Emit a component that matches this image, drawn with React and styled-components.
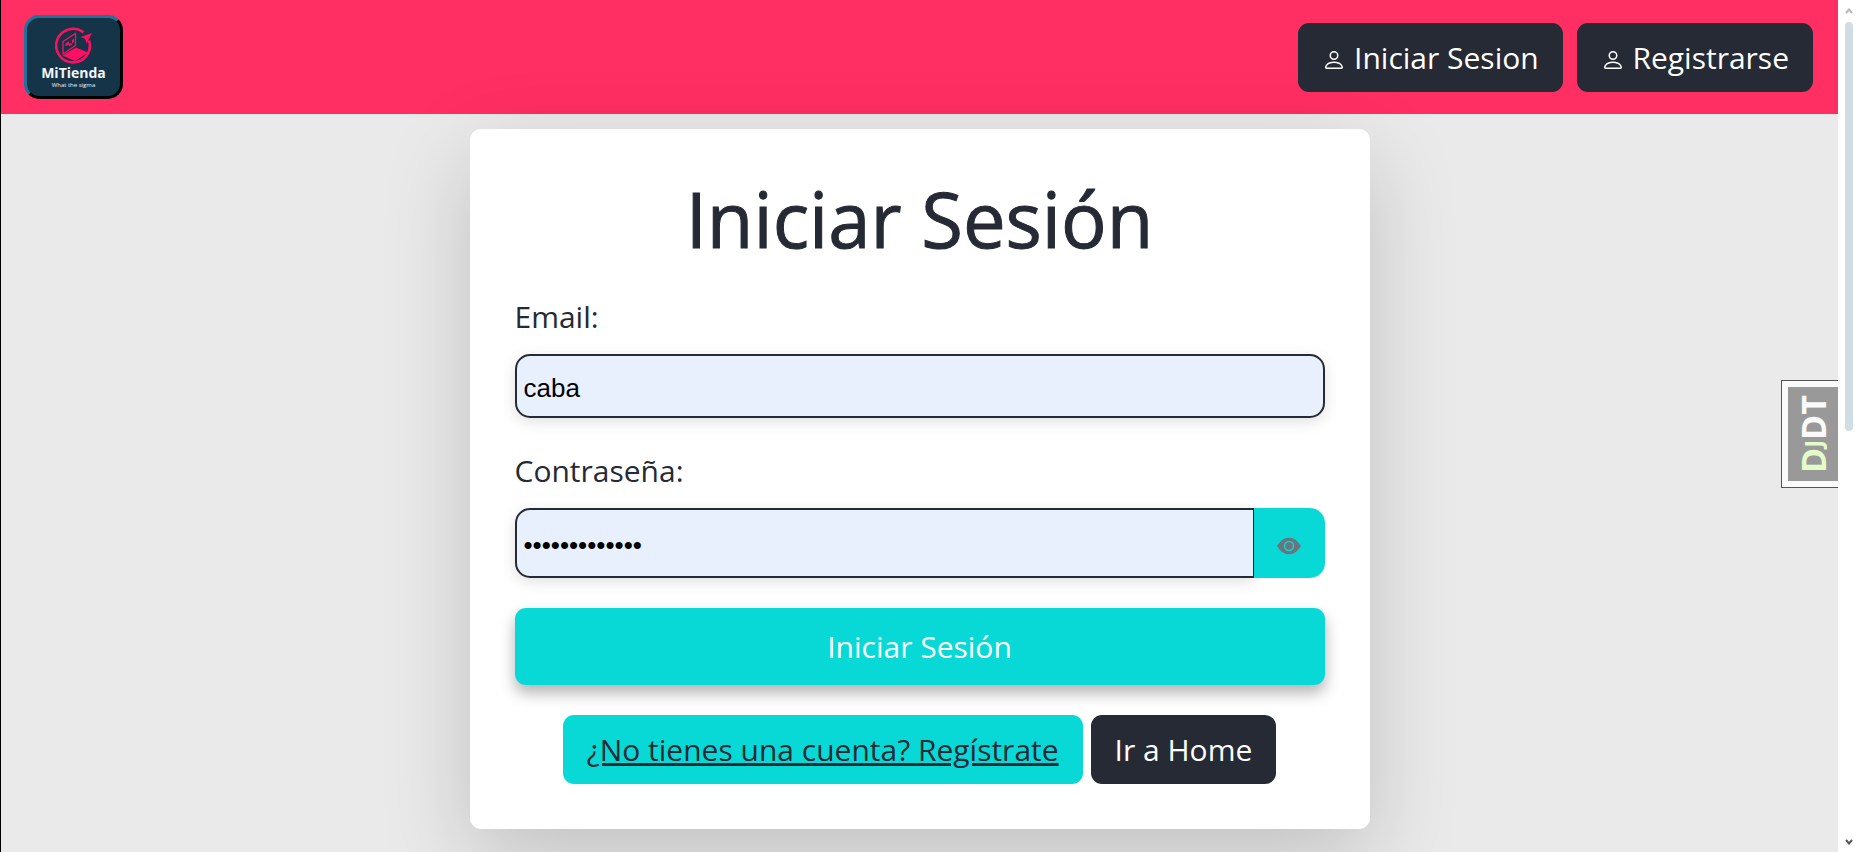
import React, { useState } from "react";
import styled, { createGlobalStyle } from "styled-components";
import { BsPerson, BsEyeFill } from "react-icons/bs";

const GlobalStyle = createGlobalStyle`
  *, *::before, *::after { box-sizing: border-box; }
  body {
    margin: 0;
    background: #eaeaea;
    color: #252a34;
    font-family: "Open Sans", "Noto Sans", sans-serif;
    font-size: 30px;
    line-height: 45px;
  }
`;

const Shell = styled.div`
  display: flex;
  min-height: 100vh;
  border-left: 1px solid #000;
`;

const Page = styled.div`
  position: relative;
  flex: 1;
  min-width: 0;
  overflow: hidden;
`;

const Header = styled.header`
  display: flex;
  align-items: center;
  justify-content: space-between;
  padding: 15px 25px 15px 23px;
  background: #ff2e63;
`;

const Logo = styled.a`
  display: flex;
  flex-direction: column;
  align-items: center;
  width: 99px;
  height: 84px;
  padding-top: 9px;
  border: 3px solid;
  border-color: #24719b #000 #000 #24719b;
  border-radius: 15px;
  background: #153447;
  color: #f2f5f7;
  text-decoration: none;
`;

const LogoName = styled.span`
  font-size: 14px;
  font-weight: 700;
  line-height: 16px;
`;

const LogoTagline = styled.span`
  font-size: 6px;
  line-height: 8px;
`;

const Nav = styled.nav`
  display: flex;
  gap: 14px;
`;

const ButtonLink = styled.a`
  display: inline-block;
  padding: 12px 24px;
  border-radius: 11px;
  background: ${(p) => (p.$accent ? "#08d9d6" : "#252a34")};
  color: ${(p) => (p.$accent ? "#252a34" : "#fff")};
  text-decoration: ${(p) => (p.$accent ? "underline" : "none")};
  text-decoration-thickness: 3px;
  text-underline-offset: 2px;
  white-space: nowrap;

  svg { font-size: 24px; vertical-align: -3px; }
`;

const Card = styled.main`
  width: 100%;
  max-width: 900px;
  margin: 15px auto 23px;
  padding: 45px;
  border-radius: 11px;
  background: #fff;
  box-shadow: 0 30px 90px rgba(0, 0, 0, 0.175);
`;

const Title = styled.h1`
  margin: 0 0 30px;
  font-size: 76px;
  font-weight: 400;
  -webkit-text-stroke: 1px currentColor;
  line-height: 90px;
  text-align: center;
`;

const Form = styled.form`
  display: flex;
  flex-direction: column;
  gap: 30px;
`;

const Field = styled.div`
  display: flex;
  flex-direction: column;
  gap: 15px;
`;

const TextInput = styled.input`
  flex: 1;
  width: 100%;
  min-width: 0;
  min-height: 64px;
  padding: 4px 7px 0;
  border: 2px solid #252a34;
  border-radius: 15px;
  outline: 0;
  background: #e8f0fe;
  color: #000;
  font-family: "Liberation Sans", Arial, sans-serif;
  font-size: 26px;
  box-shadow: 0 4px 15px rgba(0, 0, 0, 0.12);
`;

const PasswordGroup = styled.div`
  display: flex;
  min-height: 70px;

  ${TextInput} {
    border-right-width: 1px;
    border-radius: 15px 0 0 15px;
  }
`;

const RevealButton = styled.button`
  display: flex;
  align-items: center;
  justify-content: center;
  width: 71px;
  padding: 6px 0 0;
  border: 0;
  border-radius: 0 15px 15px 0;
  background: #08d9d6;
  color: #6c757d;
  font-size: 24px;
  cursor: pointer;
`;

const SubmitButton = styled.button`
  padding: 16px 24px;
  border: 0;
  border-radius: 11px;
  background: #08d9d6;
  color: #fff;
  font: inherit;
  box-shadow: 0 8px 15px rgba(0, 0, 0, 0.3);
  cursor: pointer;
`;

const Actions = styled.div`
  display: flex;
  flex-wrap: wrap;
  justify-content: center;
  gap: 8px;
`;

const DebugHandle = styled.button`
  position: absolute;
  top: 380px;
  right: 0;
  height: 108px;
  padding: 6px 0 6px 6px;
  border: 1px solid #555;
  border-right: 0;
  background: #fafafa;
  cursor: pointer;
`;

const DebugLabel = styled.span`
  display: block;
  width: 50px;
  height: 94px;
  padding: 8px 0;
  background: #999;
  color: #fafafa;
  font-family: "Open Sans", sans-serif;
  font-size: 34px;
  font-weight: 700;
  line-height: 50px;
  text-align: left;
  writing-mode: vertical-rl;
  transform: rotate(180deg);
`;

const DebugGreen = styled.span`
  color: #e3fcc8;
`;

const DebugSmall = styled.small`
  font-size: 24px;
`;

const ScrollTrack = styled.div`
  position: sticky;
  top: 0;
  display: flex;
  flex-direction: column;
  align-items: center;
  width: 21px;
  height: 100vh;
  padding: 8px 0 7px;
  background: #fff;
`;

const ScrollThumb = styled.div`
  width: 8px;
  height: 48vh;
  margin: 8px 0 auto;
  border-radius: 4px;
  background: #d1dce5;
`;

function LogoMark() {
  return (
    <svg width="38" height="38" viewBox="0 0 38 38" aria-hidden="true">
      <path d="M28.500 5.500A16.800 16.800 0 1 0 34 13.500" fill="none" stroke="#ff0f63" strokeWidth="2.600" />
      <path d="M8 14.500L20.500 6.500V18.500L8 27Z" fill="none" stroke="#ff0f63" strokeWidth="1.300" />
      <path d="M10.500 16.500L14 14.500V17L15.500 15.500V17.500L17 16V13L19 11.500V15L17 16.500V18L14 19V17.500L10.500 19.500Z" fill="#ff0f63" />
      <path d="M7.500 28.500L21 20.500L33 25.500L20 34Z" fill="#ff0f63" />
      <path d="M37 6L25.500 10L30 11.800L31.500 16.500Z" fill="#ff0f63" />
    </svg>
  );
}

function Arrow({ down, color }) {
  return (
    <svg width="8" height="6" viewBox="0 0 8 6" aria-hidden="true">
      <path d={down ? "M1 1L4 4.500L7 1" : "M1 5L4 1.500L7 5"} fill="none" stroke={color} strokeWidth="2" />
    </svg>
  );
}

export default function App() {
  const [email, setEmail] = useState("caba");
  const [password, setPassword] = useState("contrasena123");
  const [visible, setVisible] = useState(false);

  return (
    <>
      <GlobalStyle />
      <Shell>
        <Page>
          <Header>
            <Logo href="#">
              <LogoMark />
              <LogoName>MiTienda</LogoName>
              <LogoTagline>What the sigma</LogoTagline>
            </Logo>
            <Nav>
              <ButtonLink href="#login"><BsPerson /> Iniciar Sesion</ButtonLink>
              <ButtonLink href="#registro"><BsPerson /> Registrarse</ButtonLink>
            </Nav>
          </Header>
          <Card>
            <Title>Iniciar Sesión</Title>
            <Form onSubmit={(e) => e.preventDefault()}>
              <Field>
                <label htmlFor="email">Email:</label>
                <TextInput id="email" value={email} onChange={(e) => setEmail(e.target.value)} />
              </Field>
              <Field>
                <label htmlFor="password">Contraseña:</label>
                <PasswordGroup>
                  <TextInput
                    id="password"
                    type={visible ? "text" : "password"}
                    value={password}
                    onChange={(e) => setPassword(e.target.value)}
                  />
                  <RevealButton type="button" aria-label="Mostrar contraseña" onClick={() => setVisible(!visible)}>
                    <BsEyeFill />
                  </RevealButton>
                </PasswordGroup>
              </Field>
              <SubmitButton type="submit">Iniciar Sesión</SubmitButton>
              <Actions>
                <ButtonLink $accent href="#registro">¿No tienes una cuenta? Regístrate</ButtonLink>
                <ButtonLink href="#home">Ir a Home</ButtonLink>
              </Actions>
            </Form>
          </Card>
          <DebugHandle type="button">
            <DebugLabel>
              <DebugGreen>D<DebugSmall>J</DebugSmall></DebugGreen>DT
            </DebugLabel>
          </DebugHandle>
        </Page>
        <ScrollTrack>
          <Arrow color="#b8b8b8" />
          <ScrollThumb />
          <Arrow down color="#555" />
        </ScrollTrack>
      </Shell>
    </>
  );
}
